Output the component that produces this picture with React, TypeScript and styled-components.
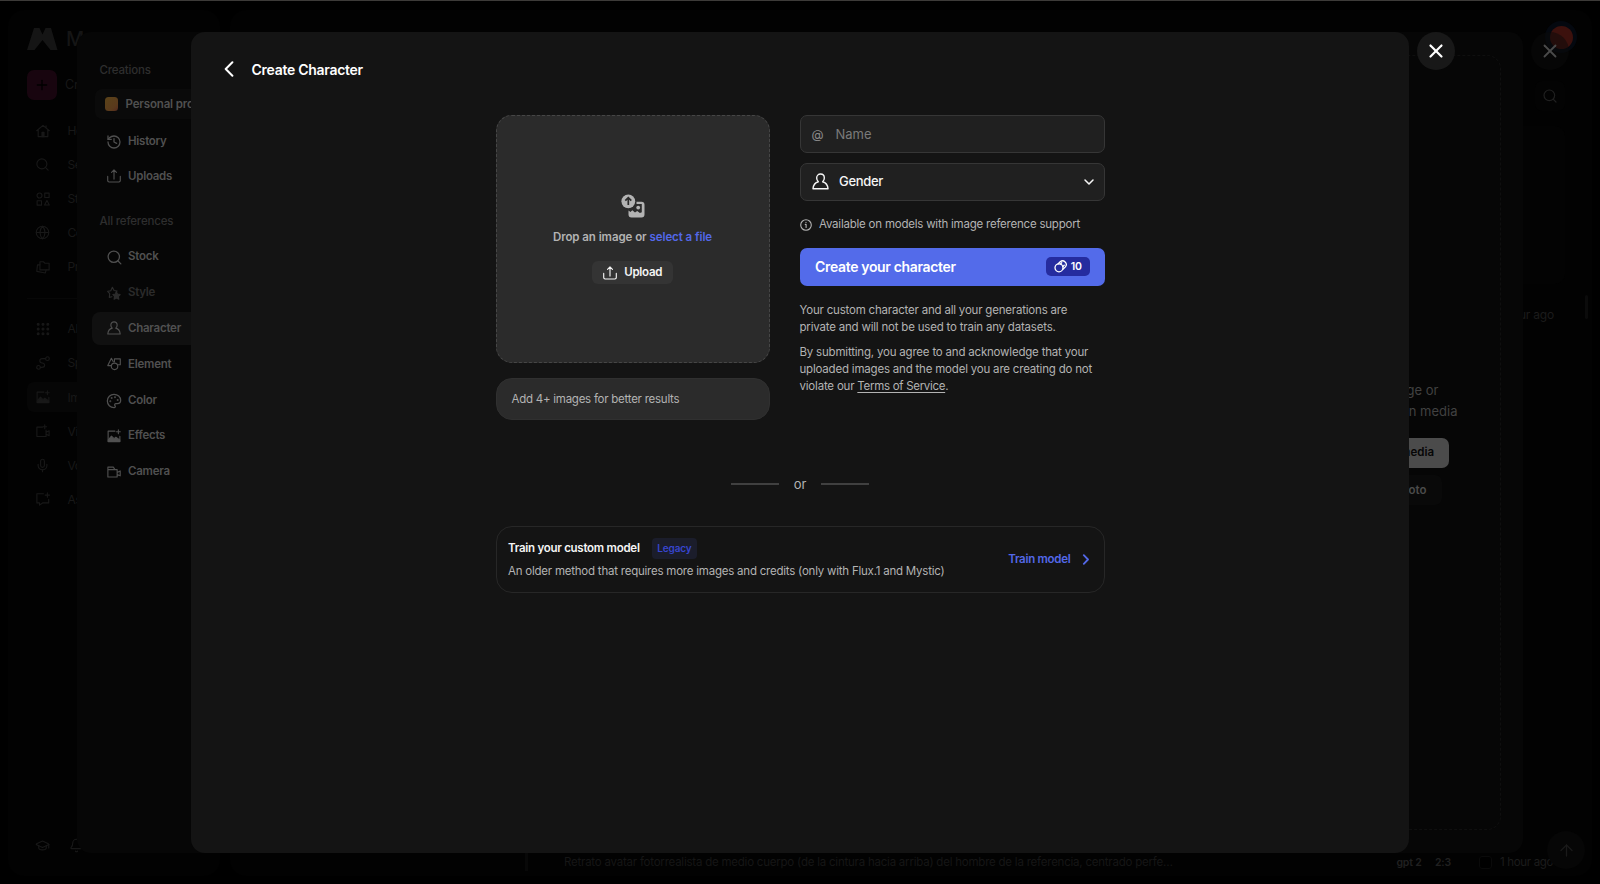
import React from 'react';
import styled, { createGlobalStyle } from 'styled-components';
import { ArrowUp, Bell, ChevronDown, Globe, GraduationCap, History, Mic, Palette, Plus, Search, X } from 'lucide-react';

const GlobalStyle = createGlobalStyle`
  * { box-sizing: border-box; }
  body { margin: 0; background: #000; overflow: hidden; }
  button { font: inherit; letter-spacing: inherit; color: inherit; border: 0; background: none; padding: 0; }
  p, h1, h2, h3 { margin: 0; font: inherit; }
`;

/* ---------- icons ---------- */

type IconProps = { size?: number; stroke?: number };

const Glyph = styled.svg`
  display: block;
  flex: none;
  fill: none;
  stroke: currentColor;
  stroke-linecap: round;
  stroke-linejoin: round;
`;

const icon = (body: React.ReactNode) => ({ size = 14, stroke = 1.3 }: IconProps) => (
  <Glyph width={size} height={size} viewBox="0 0 16 16" strokeWidth={stroke}>{body}</Glyph>
);

const UploadIcon = icon(<><path d="M8 11.5V1.2M5.2 3.8 8 1l2.8 2.8" /><path d="M.8 8.5v4.7a1.6 1.6 0 0 0 1.6 1.6h11.2a1.6 1.6 0 0 0 1.6-1.6V8.5" /></>);
const PersonIcon = icon(<path d="M6 8.2C5 7.4 4.4 6.2 4.4 4.7 4.4 2.5 6 1 8 1s3.6 1.5 3.6 3.7c0 1.5-.6 2.7-1.6 3.5 2.8.7 4.700 2.600 5.100 6.600H.9C1.300 10.800 3.200 8.900 6 8.200Z" />);
const StyleIcon = icon(<><path d="M5.600 12.200 2.600 13l.5-4.200L.8 6.200l3.500-.7L6.200 1.500l1.900 3.700 3.500.5-1.400 1.600" /><path fill="currentColor" d="m10.800 6.800 1.300 2.500 2.900.4-2 2.100.5 3.300-2.700-1.300-2.700 1.300.5-3.200-1.900-2.200 2.800-.4z" /></>);
const ElementIcon = icon(<><path d="M5.200 9.800H.9L5 1.500l2.200 4" /><path d="M8.500 5.500V2.200h6.700v6.600h-2.700" /><circle cx="8.600" cy="10.700" r="3.700" /></>);
const EffectsIcon = icon(<><path d="M9 2.500H1.300v11.800h13.400V8.500" /><path fill="currentColor" d="m1.500 12.500 3.600-4.300 3 2.800 2-1.600 4.400 3v2H1.500z" /><path d="M13 1v4.400M10.800 3.200h4.400" /></>);
const CameraIcon = icon(<><path d="M1 5.300h10.600v8.400H1zM11.600 8.500l3.500-1.700v5.600l-3.500-1.600M1 5.300V2.500h6.400l1.600 2.800" /></>);
const HomeIcon = icon(<><path d="M.8 7.700 8 1.500l7.200 6.200M2.500 6.500v8h11v-8M11.500 2v2.300" /><path fill="currentColor" d="M6.800 9.500h2.400v5H6.800z" /></>);
const ShapesIcon = icon(<><circle cx="4" cy="4" r="2.800" /><path d="M10 1.300h5v5h-5zM1.300 10h5v5h-5zM12.500 9.600l2.700 5.200H9.800z" /></>);
const FoldersIcon = icon(<><path d="M4.500 2h4l1.500 1.700h5v7.600H4.500z" /><path d="M4.500 5.500H1.700L.9 13l9.800 1.800.9-3.500" /></>);
const GridIcon = icon(<g fill="currentColor">{[2.5, 8, 13.5].map(x => [2.5, 8, 13.5].map(y => <circle key={`${x}-${y}`} cx={x} cy={y} r="1.1" />))}</g>);
const SpacesIcon = icon(<><circle cx="2.900" cy="13" r="2.100" /><circle cx="13.100" cy="3" r="2.100" /><path d="M11 3H7.200C3.500 3 3.500 7.500 7 8c4 .6 3.700 5-.2 5H5" /></>);
const VideoIcon = icon(<><path d="M7.500 3.500H1v10.800h10.500V7M11.500 9.500l3.500-1.800v5.600l-3.500-1.600M10 1v4.400M7.800 3.200h4.400" /></>);
const ChatIcon = icon(<><path d="M8.500 2H1v10.500h3V15l3.500-2.500h7V8.500M13 1v5M10.500 3.500h5" /></>);
const ChevronLeftIcon = () => <Glyph width="10" height="16" viewBox="0 0 10 16" strokeWidth="2"><path d="M8.400 1.300 1.700 8l6.700 6.700" /></Glyph>;
const ChevronRightIcon = () => <Glyph width="8" height="11" viewBox="0 0 8 11" strokeWidth="1.800"><path d="M1.800 1.200 6 5.500 1.800 9.800" /></Glyph>;
const InfoIcon = () => <Glyph width="12" height="12" viewBox="0 0 12 12" strokeWidth="1.100"><circle cx="6" cy="6" r="5.300" /><path d="M5.300 5.400h.8v3.100M6 3.300v.2" /></Glyph>;
const CoinsIcon = () => <Glyph width="13" height="13" viewBox="0 0 13 13" strokeWidth="1.300"><circle cx="5" cy="7.800" r="4" /><path d="M4.200 3.800 6.200 1.700a3.700 3.700 0 0 1 5.200 5.200L9.200 9M6.500 3.900 7.700 2.800M9 6.500l1.200-1.200" /></Glyph>;
const DropImageIcon = () => (
  <svg width="24" height="24" viewBox="0 0 24 24">
    <path fill="#b3b3b3" fillRule="evenodd" d="M15.500 7.800H20.500a3 3 0 0 1 3 3V20.500a3 3 0 0 1-3 3H10.500a3 3 0 0 1-3-3V16.500l2 1.500 1.800-1.800 2.700 2.300 2.200-1.500 2.700 2 1.900-.8V10H15.500z" />
    <circle cx="17.200" cy="13.600" r="1.900" fill="#b3b3b3" />
    <circle cx="7.300" cy="7.300" r="6.900" fill="#b3b3b3" />
    <path d="M7.300 11V4M4.300 6.700l3-3 3 3" fill="none" stroke="#2b2b2b" strokeWidth="1.700" />
  </svg>
);
const Logo = () => (
  <svg width="31" height="22" viewBox="0 0 31 22">
    <path fill="#151515" d="M7 0h5.500l3 6.500L18.500 0H24l6.500 22h-7L15.500 12 7.500 22H0z" />
  </svg>
);

/* ---------- page behind the dialogs ---------- */

const Screen = styled.div`
  position: relative;
  width: 1600px;
  height: 884px;
  overflow: hidden;
  background: #000;
  border-top: 1px solid #3c3a38;
  font-family: Inter, "Liberation Sans", sans-serif;
  font-size: 11.5px;
  letter-spacing: -0.2px;
  line-height: 17px;
`;

const Shell = styled.div`
  display: grid;
  grid-template-columns: 212px 1fr;
  gap: 10px;
  height: 883px;
  padding: 9px 8px 8px;
`;

const Panel = styled.div`
  display: flex;
  flex-direction: column;
  background: #020202;
  border-radius: 16px;
  min-width: 0;
`;

const Rail = styled(Panel)`
  padding: 18px 0 23px 19px;
  color: #181818;
`;

const Brand = styled.div`
  display: flex;
  align-items: center;
  gap: 8px;
  height: 22px;
  font-size: 20px;
  font-weight: 500;
  color: #151515;
`;

const CreateRow = styled.div`
  display: flex;
  align-items: center;
  gap: 8px;
  margin-top: 19.5px;
  height: 30px;
  font-size: 12.5px;
`;

const CreateBadge = styled.span`
  display: grid;
  place-items: center;
  width: 30px;
  height: 30px;
  border-radius: 7px;
  background: #18050f;
  color: #000;
`;

const RailList = styled.div<{ $top: number }>`
  display: flex;
  flex-direction: column;
  gap: 4.1px;
  margin-top: ${p => p.$top}px;
`;

const RailItem = styled.div<{ $active?: boolean }>`
  display: flex;
  align-items: center;
  gap: 17.5px;
  height: 30px;
  padding-left: 8px;
  border-radius: 7px;
  font-size: 12px;
  letter-spacing: -0.4px;
  background: ${p => (p.$active ? '#060606' : 'transparent')};
`;

const RailRule = styled.div`
  height: 1px;
  margin-top: 16px;
  background: #070707;
`;

const RailFooter = styled.div`
  display: flex;
  align-items: center;
  gap: 19px;
  margin-top: auto;
  padding-left: 8px;
`;

const Feed = styled(Panel)`
  align-items: flex-end;
  color: #161616;
  padding: 11px 4px 5px 0;
  position: relative;
`;

const Avatar = styled.div`
  width: 32px;
  height: 32px;
  margin-right: 11px;
  display: grid;
  place-items: center;
  border-radius: 50%;
  background: #04080f;
  &::after { content: ''; width: 23px; height: 23px; border-radius: 50%; background: #3c110d; }
`;

const FeedSearch = styled.div`
  display: grid;
  place-items: center;
  width: 30px;
  height: 30px;
  margin: 27.5px 23px 0 0;
  border-radius: 7px;
  background: #030303;
  color: #202020;
`;

const FeedCard = styled.div`
  width: 900px;
  height: 158px;
  margin: 15px 23px 0 0;
  border-radius: 10px;
  background: #030303;
`;

const FeedMeta = styled.div`
  display: flex;
  align-items: center;
  gap: 31px;
  height: 26px;
  margin-top: 18px;
  color: #1c1c1c;
  font-size: 12px;
`;

const ScrollThumb = styled.i`
  width: 3px;
  height: 24px;
  margin-top: -16px;
  border-radius: 2px;
  background: #0b0b0b;
`;

const FeedFooter = styled.div`
  display: flex;
  align-items: center;
  align-self: stretch;
  height: 18px;
  margin-top: auto;
  padding-left: 295px;
  padding-right: 35px;
  white-space: nowrap;
`;

const FooterMark = styled.i`
  width: 3px;
  height: 18px;
  margin-right: 36px;
  background: #080808;
`;

const Prompt = styled.span`
  width: 832.5px;
  letter-spacing: -0.225px;
`;

const Tag = styled.span<{ $width: number }>`
  width: ${p => p.$width}px;
  color: #202020;
  font-size: 10.5px;
  font-weight: 600;
`;

const CheckSquare = styled.i`
  width: 13px;
  height: 13px;
  margin-right: 8px;
  border: 1px solid #0a0a0a;
  border-radius: 3px;
  background: #000;
`;

const Stamp = styled.span`
  margin-left: auto;
  letter-spacing: -0.35px;
  color: #1c1c1c;
`;

const ToTop = styled.div`
  position: absolute;
  right: 7px;
  bottom: 7px;
  display: grid;
  place-items: center;
  width: 38px;
  height: 38px;
  border-radius: 50%;
  background: #060606;
  color: #1a1a1a;
`;

/* ---------- dialogs ---------- */

const Layer = styled.div`
  position: absolute;
  inset: 0;
  display: flex;
  justify-content: center;
  align-items: flex-start;
  padding-top: 30.5px;
`;

const Dialog = styled.section<{ $width: number; $tone: string }>`
  position: relative;
  display: flex;
  width: ${p => p.$width}px;
  height: 821.5px;
  border-radius: 14px;
  background: ${p => p.$tone};
`;

const CloseButton = styled.button<{ $dim?: boolean }>`
  position: absolute;
  left: calc(100% + 8px);
  top: 0;
  display: grid;
  place-items: center;
  width: 38px;
  height: 38px;
  border-radius: 50%;
  background: ${p => (p.$dim ? 'rgba(10, 10, 10, 0.5)' : '#181818')};
  color: ${p => (p.$dim ? '#4a4a4a' : '#fff')};
`;

const Library = styled.nav`
  display: flex;
  flex-direction: column;
  width: 216px;
  padding: 30px 16px 0 15px;
  color: #505050;
  font-weight: 600;
  letter-spacing: -0.25px;
`;

const LibraryHeading = styled.h3<{ $top?: number }>`
  margin: ${p => p.$top ?? 0}px 0 0 7.5px;
  color: #2e2e2e;
  font-weight: 500;
  letter-spacing: -0.18px;
`;

const Project = styled.div`
  display: flex;
  align-items: center;
  gap: 7.5px;
  height: 30px;
  margin: 10.5px 0 6.5px 3px;
  padding-left: 9.500px;
  border-radius: 7px;
  background: #0a0a0a;
  letter-spacing: -0.15px;
  white-space: nowrap;
`;

const Swatch = styled.i`
  width: 13.5px;
  height: 13.5px;
  border-radius: 3.5px;
  background: linear-gradient(135deg, #5a4319, #5a3a1c 70%, #552a1e);
`;

const LibraryList = styled.div<{ $gap: number; $top?: number }>`
  display: flex;
  flex-direction: column;
  gap: ${p => p.$gap}px;
  margin-top: ${p => p.$top ?? 0}px;
`;

const LibraryItem = styled.div<{ $active?: boolean; $muted?: boolean }>`
  display: flex;
  align-items: center;
  gap: 7px;
  height: 32.5px;
  padding-left: 14px;
  border-radius: 8px;
  background: ${p => (p.$active ? '#101010' : 'transparent')};
  color: ${p => (p.$muted ? '#2b2b2b' : 'inherit')};
`;

/* Every glyph sits in the same square, whatever its own size. */
const IconSlot = styled.span`
  display: grid;
  place-items: center;
  flex: none;
  width: 15px;
  height: 15px;
`;

const MediaArea = styled.div`
  flex: 1;
  display: flex;
  flex-direction: column;
  align-items: flex-end;
  margin: 23px 22.5px 23px 0;
  padding-top: 324.5px;
  border: 1px dashed #0f0f0f;
  border-radius: 14px;
  color: #414141;
  font-size: 13px;
  line-height: 21px;
  letter-spacing: 0;
`;

const MediaText = styled.p<{ $right: number }>`
  margin-right: ${p => p.$right}px;
`;

const MediaButton = styled.button<{ $right: number; $solid?: boolean }>`
  height: 30px;
  margin: ${p => (p.$solid ? '15.5px' : '7.5px')} ${p => p.$right}px 0 0;
  padding: 0 15px;
  border-radius: 7px;
  font-size: 11.5px;
  font-weight: 600;
  background: ${p => (p.$solid ? '#4b4b4b' : '#090909')};
  color: ${p => (p.$solid ? '#060606' : '#4b4b4b')};
`;

const Creator = styled.div`
  flex: 1;
  display: flex;
  flex-direction: column;
  align-items: center;
`;

const Header = styled.header`
  display: flex;
  align-items: center;
  align-self: stretch;
  gap: 18px;
  height: 75px;
  padding-left: 32.5px;
  color: #fff;
  font-size: 14px;
  font-weight: 600;
  letter-spacing: -0.28px;
`;

const Columns = styled.div`
  display: grid;
  grid-template-columns: 274px 305px;
  justify-content: space-between;
  width: 609px;
  margin-top: 8.5px;
`;

const Stack = styled.div`
  display: flex;
  flex-direction: column;
`;

const DropZone = styled.div`
  display: flex;
  flex-direction: column;
  align-items: center;
  height: 248px;
  padding-top: 78px;
  border: 1px dashed #464646;
  border-radius: 16px;
  background: #2b2b2b;
  color: #b3b3b3;
  font-weight: 600;
  letter-spacing: -0.06px;
`;

const DropText = styled.p`
  margin-top: 10.5px;
`;

const Accent = styled.span`
  color: #5368e8;
`;

const UploadButton = styled.button`
  display: flex;
  align-items: center;
  gap: 7.5px;
  height: 23px;
  margin-top: 15.5px;
  padding: 0 11px;
  border-radius: 6px;
  background: #343434;
  color: #f5f5f5;
  letter-spacing: -0.25px;
`;

const Hint = styled.div`
  display: flex;
  align-items: center;
  height: 42px;
  margin-top: 15px;
  padding-left: 15px;
  border: 1px solid #303030;
  border-radius: 16px;
  background: #2b2b2b;
  color: #b3b3b3;
  letter-spacing: -0.25px;
`;

const Field = styled.div<{ $filled?: boolean }>`
  display: flex;
  align-items: center;
  gap: ${p => (p.$filled ? 10.5 : 11.5)}px;
  height: 38px;
  margin-bottom: 9.5px;
  padding: 0 11px;
  border: 1px solid #363636;
  border-radius: 7px;
  background: #202020;
  color: ${p => (p.$filled ? '#f5f5f5' : '#7a7a7a')};
  font-size: 13px;
  font-weight: ${p => (p.$filled ? 500 : 400)};
  letter-spacing: ${p => (p.$filled ? -0.3 : 0)}px;
  > :last-child:not(span) { margin: 0 -4px 0 auto; }
`;

const AtSign = styled.span`
  width: 12.5px;
  font-size: 12.5px;
  color: #8a8a8a;
`;

const Note = styled.div`
  display: flex;
  align-items: center;
  gap: 7.5px;
  height: 17px;
  margin-top: 6px;
  color: #b3b3b3;
  letter-spacing: -0.22px;
`;

const Submit = styled.button`
  display: flex;
  align-items: center;
  justify-content: space-between;
  height: 38px;
  margin-top: 15px;
  padding: 0 15px 1px 15.5px;
  border-radius: 7px;
  background: #536bea;
  color: #fff;
  font-size: 14px;
  font-weight: 600;
  letter-spacing: -0.34px;
`;

const Cost = styled.span`
  display: flex;
  align-items: center;
  gap: 4px;
  height: 19.5px;
  padding: 0 8px;
  border-radius: 5px;
  background: #252c9f;
  font-size: 10.5px;
`;

const Legal = styled.p<{ $top: number }>`
  margin-top: ${p => p.$top}px;
  color: #b3b3b3;
  line-height: 17.2px;
  letter-spacing: -0.2px;
  white-space: nowrap;
`;

const Terms = styled.a`
  text-decoration: underline;
  text-underline-offset: 2px;
  letter-spacing: -0.3px;
`;

const Divider = styled.div`
  display: flex;
  align-items: center;
  gap: 15px;
  margin-top: 55.5px;
  color: #b3b3b3;
  font-size: 13px;
  &::before, &::after { content: ''; width: 48px; height: 1.5px; background: #404040; }
`;

const ModelCard = styled.div`
  display: flex;
  align-items: center;
  justify-content: space-between;
  width: 609px;
  height: 67px;
  margin-top: 33px;
  padding: 0 14px 0 11.5px;
  border: 1px solid #272727;
  border-radius: 16px;
`;

const ModelTitle = styled.div`
  display: flex;
  align-items: center;
  gap: 12px;
  color: #f5f5f5;
  font-weight: 600;
  letter-spacing: -0.26px;
`;

const Badge = styled.span`
  padding: 2px 5.5px;
  border-radius: 4px;
  background: #1b1d2b;
  color: #3745cf;
  font-size: 10px;
  font-weight: 600;
  letter-spacing: -0.1px;
`;

const ModelText = styled.p`
  margin-top: 4px;
  color: #b3b3b3;
  letter-spacing: -0.225px;
`;

const ModelLink = styled.a`
  display: flex;
  align-items: center;
  gap: 11px;
  color: #5368e8;
  font-weight: 600;
  letter-spacing: -0.28px;
`;

const railMain: [React.ReactNode, string][] = [
  [<HomeIcon />, 'Home'],
  [<Search size={15} strokeWidth={1.8} />, 'Search'],
  [<ShapesIcon />, 'Stock'],
  [<Globe size={15} strokeWidth={1.8} />, 'Community'],
  [<FoldersIcon />, 'Projects'],
];

const railTools: [React.ReactNode, string][] = [
  [<GridIcon />, 'All tools'],
  [<SpacesIcon />, 'Spaces'],
  [<EffectsIcon />, 'Image'],
  [<VideoIcon />, 'Video'],
  [<Mic size={15} strokeWidth={1.8} />, 'Voice'],
  [<ChatIcon />, 'Assistant'],
];

const creations: [React.ReactNode, string][] = [
  [<History size={16} strokeWidth={1.9} />, 'History'],
  [<UploadIcon />, 'Uploads'],
];

const references: [React.ReactNode, string][] = [
  [<Search size={17} strokeWidth={1.8} />, 'Stock'],
  [<StyleIcon />, 'Style'],
  [<PersonIcon />, 'Character'],
  [<ElementIcon />, 'Element'],
  [<Palette size={16} strokeWidth={1.9} />, 'Color'],
  [<EffectsIcon />, 'Effects'],
  [<CameraIcon />, 'Camera'],
];

export default function App() {
  return (
    <Screen>
      <GlobalStyle />
      <Shell>
        <Rail>
          <Brand><Logo />M</Brand>
          <CreateRow><CreateBadge><Plus size={16} strokeWidth={2} /></CreateBadge>Create</CreateRow>
          <RailList $top={16}>
            {railMain.map(([glyph, label]) => <RailItem key={label}><IconSlot>{glyph}</IconSlot>{label}</RailItem>)}
          </RailList>
          <RailRule />
          <RailList $top={15}>
            {railTools.map(([glyph, label]) => <RailItem key={label} $active={label === 'Image'}><IconSlot>{glyph}</IconSlot>{label}</RailItem>)}
          </RailList>
          <RailFooter><GraduationCap size={15} strokeWidth={1.8} /><Bell size={15} strokeWidth={1.8} /></RailFooter>
        </Rail>
        <Feed>
          <Avatar />
          <FeedSearch><Search size={16} strokeWidth={1.8} /></FeedSearch>
          <FeedCard />
          <FeedMeta>1 hour ago<ScrollThumb /></FeedMeta>
          <FeedFooter>
            <FooterMark />
            <Prompt>Retrato avatar fotorrealista de medio cuerpo (de la cintura hacia arriba) del hombre de la referencia, centrado perfe…</Prompt>
            <Tag $width={38.5}>gpt 2</Tag>
            <Tag $width={43.5}>2:3</Tag>
            <CheckSquare />
            <Stamp>1 hour ago</Stamp>
          </FeedFooter>
          <ToTop><ArrowUp size={19} strokeWidth={1.6} /></ToTop>
        </Feed>
      </Shell>

      <Layer>
        <Dialog $width={1446} $tone="#060606">
          <Library>
            <LibraryHeading>Creations</LibraryHeading>
            <Project><Swatch />Personal project</Project>
            <LibraryList $gap={2}>
              {creations.map(([glyph, label]) => <LibraryItem key={label}><IconSlot>{glyph}</IconSlot>{label}</LibraryItem>)}
            </LibraryList>
            <LibraryHeading $top={20.5}>All references</LibraryHeading>
            <LibraryList $gap={3.35} $top={10.5}>
              {references.map(([glyph, label]) => (
                <LibraryItem key={label} $active={label === 'Character'} $muted={label === 'Style'}><IconSlot>{glyph}</IconSlot>{label}</LibraryItem>
              ))}
            </LibraryList>
          </Library>
          <MediaArea>
            <MediaText $right={61}>image or</MediaText>
            <MediaText $right={42}>own media</MediaText>
            <MediaButton $right={50.5} $solid>media</MediaButton>
            <MediaButton $right={58}>photo</MediaButton>
          </MediaArea>
          <CloseButton $dim><X size={22} strokeWidth={2} /></CloseButton>
        </Dialog>
      </Layer>

      <Layer>
        <Dialog $width={1218} $tone="#141414">
          <Creator>
            <Header><ChevronLeftIcon /><h1>Create Character</h1></Header>
            <Columns>
              <Stack>
                <DropZone>
                  <DropImageIcon />
                  <DropText>Drop an image or <Accent>select a file</Accent></DropText>
                  <UploadButton><UploadIcon />Upload</UploadButton>
                </DropZone>
                <Hint>Add 4+ images for better results</Hint>
              </Stack>
              <Stack>
                <Field><AtSign>@</AtSign><span>Name</span></Field>
                <Field $filled><PersonIcon size={17} /><span>Gender</span><ChevronDown size={16} strokeWidth={2.3} /></Field>
                <Note><InfoIcon />Available on models with image reference support</Note>
                <Submit>Create your character<Cost><CoinsIcon />10</Cost></Submit>
                <Legal $top={15.5}>Your custom character and all your generations are<br />private and will not be used to train any datasets.</Legal>
                <Legal $top={8}>By submitting, you agree to and acknowledge that your<br />uploaded images and the model you are creating do not<br />violate our <Terms>Terms of Service</Terms>.</Legal>
              </Stack>
            </Columns>
            <Divider>or</Divider>
            <ModelCard>
              <div>
                <ModelTitle>Train your custom model<Badge>Legacy</Badge></ModelTitle>
                <ModelText>An older method that requires more images and credits (only with Flux.1 and Mystic)</ModelText>
              </div>
              <ModelLink>Train model<ChevronRightIcon /></ModelLink>
            </ModelCard>
          </Creator>
          <CloseButton><X size={22} strokeWidth={2.4} /></CloseButton>
        </Dialog>
      </Layer>
    </Screen>
  );
}
